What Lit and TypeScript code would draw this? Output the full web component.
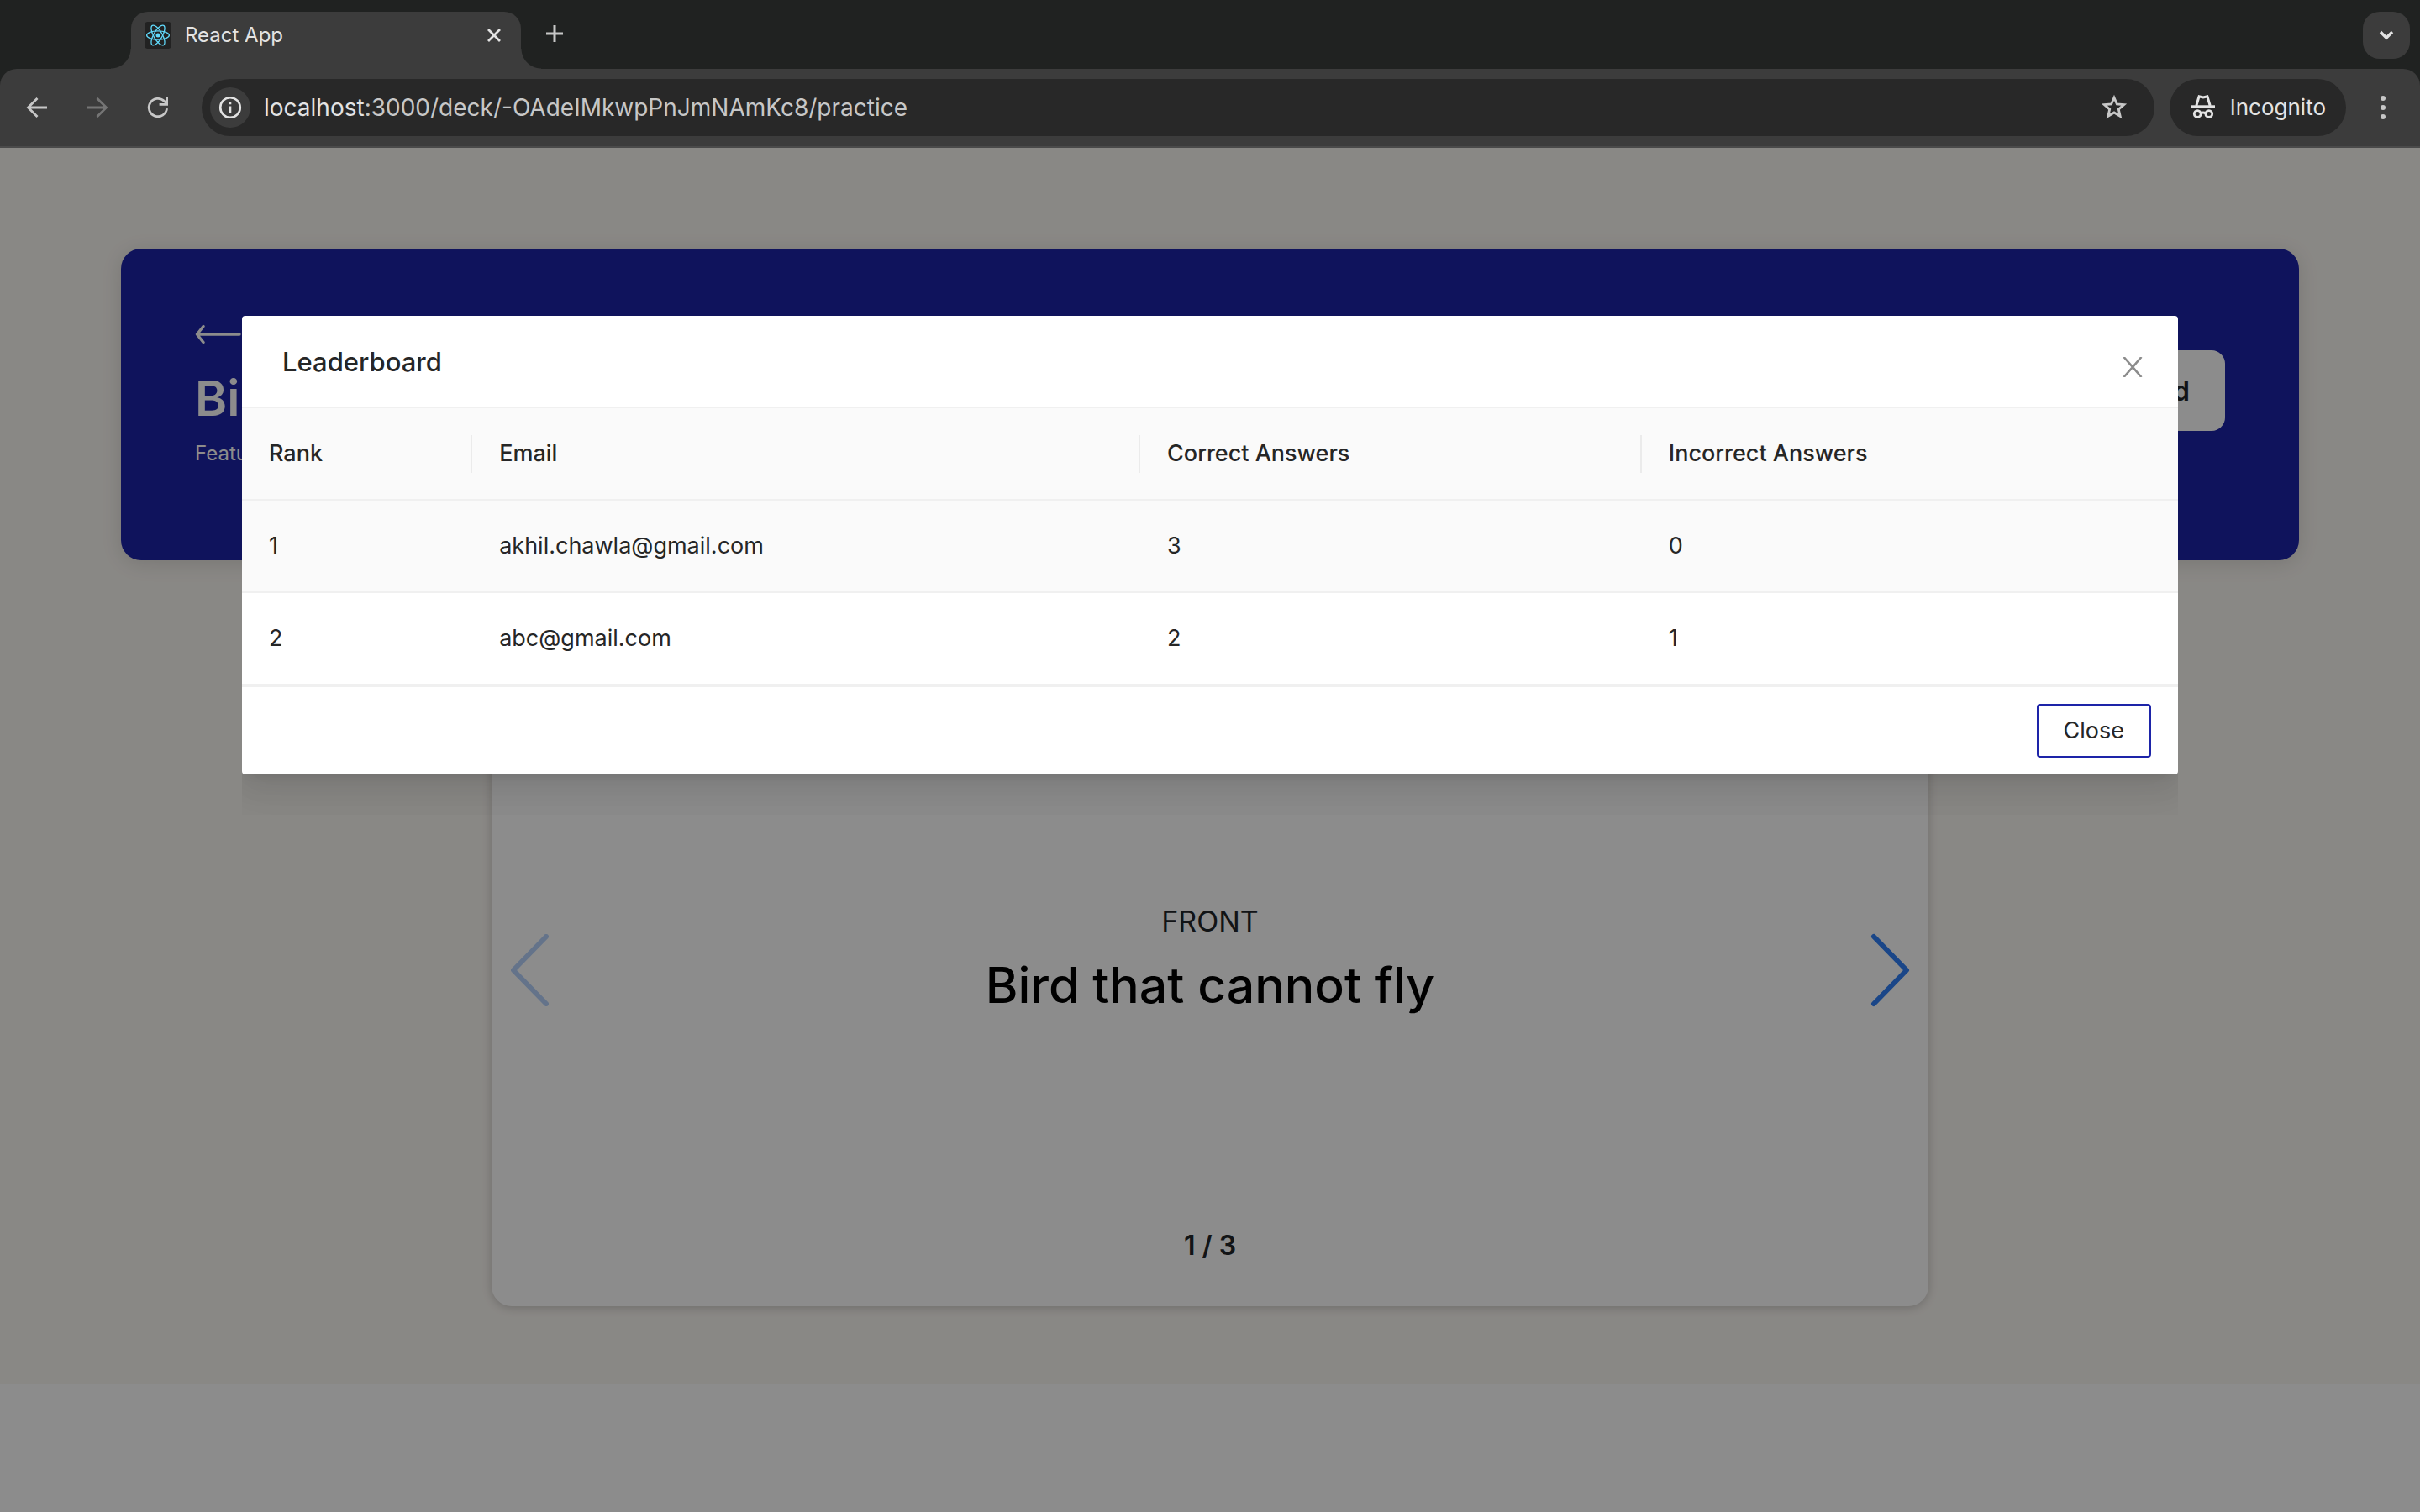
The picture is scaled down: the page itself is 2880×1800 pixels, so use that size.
import { LitElement, html, css, svg } from "lit";
import { customElement, property, state } from "lit/decorators.js";

interface Score {
  rank: number;
  email: string;
  correct: number;
  incorrect: number;
}

const FONT = css`Inter, "Liberation Sans", sans-serif`;

const reset = css`
  * {
    box-sizing: border-box;
  }
  button {
    font: inherit;
    color: inherit;
    background: none;
    border: 0;
    margin: 0;
    padding: 0;
    cursor: pointer;
  }
  svg {
    display: block;
    fill: none;
    stroke: currentColor;
  }
`;

@customElement("browser-bar")
export class BrowserBar extends LitElement {
  @property() url = "";
  @property() host = "";

  static styles = [
    reset,
    css`
      :host {
        display: block;
        background: #202221;
        color: #c7c7c7;
        font-family: ${FONT};
      }
      .strip {
        display: flex;
        align-items: flex-start;
        justify-content: space-between;
        height: 82px;
        padding: 14px 12px 0 156px;
      }
      .tabs {
        display: flex;
      }
      .tab {
        position: relative;
        display: flex;
        align-items: center;
        gap: 16px;
        width: 464px;
        height: 68px;
        padding: 0 20px 12px 16px;
        border-radius: 20px 20px 0 0;
        background: #3c3c3c;
        color: #e3e3e3;
      }
      .tab::before,
      .tab::after {
        content: "";
        position: absolute;
        bottom: 0;
        width: 24px;
        height: 24px;
      }
      .tab::before {
        right: 100%;
        background: radial-gradient(circle at 0 0, transparent 23px, #3c3c3c 24px);
      }
      .tab::after {
        left: 100%;
        background: radial-gradient(circle at 100% 0, transparent 23px, #3c3c3c 24px);
      }
      .tab-title {
        flex: 1;
        font-size: 24px;
        line-height: 32px;
      }
      .tab-close,
      .new-tab {
        display: grid;
        place-items: center;
      }
      .tab-close {
        width: 24px;
        height: 32px;
      }
      .new-tab {
        width: 80px;
        height: 52px;
      }
      .tab-search {
        display: grid;
        place-items: center;
        width: 56px;
        height: 56px;
        border-radius: 20px;
        background: #3c3c3c;
        color: #e3e3e3;
      }
      .toolbar {
        display: flex;
        align-items: center;
        height: 94px;
        padding: 0 20px 0 8px;
        border-bottom: 2px solid #4a4a4a;
        border-radius: 20px 20px 0 0;
        background: #3c3c3c;
      }
      .nav {
        display: flex;
        padding-right: 16px;
      }
      .nav-button {
        display: grid;
        place-items: center;
        width: 72px;
        height: 68px;
      }
      .nav-button:disabled {
        color: #757575;
      }
      .omnibox {
        display: flex;
        flex: 1;
        align-items: center;
        height: 68px;
        padding: 0 32px 0 10px;
        border-radius: 34px;
        background: #282828;
        font-size: 28px;
        line-height: 36px;
      }
      .site-info {
        display: grid;
        place-items: center;
        width: 48px;
        height: 48px;
        margin-right: 16px;
        border-radius: 50%;
        background: #3c3c3c;
        color: #e3e3e3;
      }
      .address {
        flex: 1;
      }
      .address-host {
        color: #e3e3e3;
      }
      .incognito {
        display: flex;
        align-items: center;
        gap: 16px;
        height: 68px;
        margin-left: 18px;
        padding: 0 24px;
        border-radius: 34px;
        background: #282828;
        color: #e3e3e3;
        font-size: 26px;
        line-height: 36px;
      }
      .menu {
        display: grid;
        place-items: center;
        width: 48px;
        height: 68px;
        margin-left: 20px;
      }
    `,
  ];

  render() {
    return html`
      <div class="strip">
        <div class="tabs">
          <div class="tab">
            <svg width="32" height="32" viewBox="0 0 32 32" aria-hidden="true">
              <rect width="32" height="32" rx="4" fill="#222" stroke="none" />
              <g stroke="#61dafb" stroke-width="1.3">
                ${[0, 60, 120].map(
                  (a) => svg`<ellipse cx="16" cy="16" rx="13.4" ry="5.1" transform="rotate(${a} 16 16)" />`,
                )}
              </g>
              <circle cx="16" cy="16" r="2.5" fill="#61dafb" stroke="none" />
            </svg>
            <span class="tab-title">React App</span>
            <button class="tab-close" aria-label="Close tab">
              <svg width="18" height="18" viewBox="0 0 18 18" stroke-width="2.8">
                <path d="M2 2l14 14M16 2L2 16" />
              </svg>
            </button>
          </div>
          <button class="new-tab" aria-label="New tab">
            <svg width="22" height="22" viewBox="0 0 22 22" stroke-width="3"><path d="M11 1v20M1 11h20" /></svg>
          </button>
        </div>
        <button class="tab-search" aria-label="Search tabs">
          <svg width="20" height="14" viewBox="0 0 20 14" stroke-width="3.4"><path d="M3 3l7 7 7-7" /></svg>
        </button>
      </div>
      <div class="toolbar">
        <div class="nav">
          <button class="nav-button" aria-label="Back">
            <svg width="26" height="26" viewBox="0 0 26 26" stroke-width="2.8">
              <path d="M25 13H3M13.5 2L2.5 13l11 11" />
            </svg>
          </button>
          <button class="nav-button" aria-label="Forward" disabled>
            <svg width="26" height="26" viewBox="0 0 26 26" stroke-width="2.8">
              <path d="M1 13h22M12.5 2l11 11-11 11" />
            </svg>
          </button>
          <button class="nav-button" aria-label="Reload">
            <svg width="28" height="28" viewBox="0 0 28 28" stroke-width="2.8">
              <path d="M24.6 15.2A10.7 10.7 0 1 1 21.6 6.500L24 9" />
              <path d="M24.600 2v8.400h-9" />
            </svg>
          </button>
        </div>
        <div class="omnibox">
          <button class="site-info" aria-label="View site information">
            <svg width="28" height="28" viewBox="0 0 28 28" stroke-width="2.6">
              <circle cx="14" cy="14" r="11.8" />
              <path d="M14 12.500v8M14 7.500v2.800" />
            </svg>
          </button>
          <span class="address"><span class="address-host">${this.host}</span>${this.url}</span>
          <button aria-label="Bookmark this tab">
            <svg width="32" height="32" viewBox="0 0 32 32" stroke-width="2.8">
              <path
                d="M16 4.200l3.300 7.700 8.400.7-6.400 5.500 1.900 8.200L16 22l-7.200 4.300 1.900-8.200-6.400-5.500 8.400-.7z"
              />
            </svg>
          </button>
        </div>
        <div class="incognito">
          <svg width="32" height="32" viewBox="0 0 32 32" aria-hidden="true">
            <path d="M2 14.800h28" stroke-width="3" />
            <path d="M7.800 14l3.300-11.300 4.900 1.200 4.900-1.200L24.200 14" stroke-width="3" />
            <g stroke-width="2.8">
              <circle cx="9.200" cy="23.500" r="3.900" />
              <circle cx="22.800" cy="23.500" r="3.900" />
              <path d="M13 23q3-2 6 0" />
            </g>
          </svg>
          <span>Incognito</span>
        </div>
        <button class="menu" aria-label="Browser menu">
          <svg width="6" height="28" viewBox="0 0 6 28">
            <g fill="#c7c7c7" stroke="none">
              <circle cx="3" cy="3" r="3" />
              <circle cx="3" cy="14" r="3" />
              <circle cx="3" cy="25" r="3" />
            </g>
          </svg>
        </button>
      </div>
    `;
  }
}

@customElement("practice-page")
export class PracticePage extends LitElement {
  @property({ type: Number }) index = 1;
  @property({ type: Number }) total = 3;

  static styles = [
    reset,
    css`
      :host {
        display: flex;
        flex-direction: column;
        align-items: center;
        padding: 120px 5% 93px;
        background: #faf7f2;
        font-family: ${FONT};
      }
      .banner {
        display: flex;
        align-items: flex-start;
        justify-content: space-between;
        width: 100%;
        min-height: 371px;
        padding: 88px;
        border-radius: 24px;
        background: #1d24a8;
        box-shadow: 0 4px 24px rgba(0, 0, 0, 0.12);
        color: #fff;
      }
      .deck {
        display: flex;
        flex-direction: column;
        align-items: flex-start;
      }
      .title {
        margin: 24px 0 0;
        font-size: 58px;
        font-weight: 600;
        line-height: 76px;
      }
      .note {
        margin: 10px 0 0;
        font-size: 24px;
        line-height: 36px;
      }
      .board-button {
        height: 96px;
        margin-top: 33px;
        padding: 0 42px;
        border-radius: 16px;
        background: #fff;
        color: #212529;
        font-size: 32px;
        font-weight: 600;
      }
      .card {
        display: grid;
        grid-template: 1fr auto 1fr / auto 1fr auto;
        align-items: center;
        width: 66%;
        min-height: 800px;
        margin-top: 88px;
        padding: 0 22px;
        border-radius: 24px;
        background: #fff;
        box-shadow: 0 2px 12px rgba(0, 0, 0, 0.2);
        text-align: center;
      }
      .chevron {
        grid-row: 2;
        color: #3180f7;
      }
      .chevron:disabled {
        opacity: 0.35;
      }
      .face {
        grid-row: 2;
      }
      .side {
        margin: 0;
        color: #212529;
        font-size: 34px;
        line-height: 48px;
      }
      .question {
        margin: 12px 0 24px;
        color: #000;
        font-size: 59px;
        font-weight: 500;
        line-height: 80px;
      }
      .counter {
        grid-area: 3 / 2;
        align-self: end;
        margin: 0;
        padding-bottom: 48px;
        color: #212529;
        font-size: 32px;
        font-weight: 600;
        line-height: 48px;
      }
    `,
  ];

  render() {
    return html`
      <header class="banner">
        <div class="deck">
          <button aria-label="Back to decks">
            <svg width="56" height="28" viewBox="0 0 56 28" stroke-width="3.4" stroke-linecap="round" stroke-linejoin="round">
              <path d="M53 14H2.500M10 4.500L2.500 14l7.500 9.500" />
            </svg>
          </button>
          <h1 class="title">Bi</h1>
          <p class="note">Featu</p>
        </div>
        <button class="board-button">Leaderboard</button>
      </header>
      <section class="card">
        <button class="chevron" aria-label="Previous card" ?disabled=${this.index === 1}>
          <svg width="48" height="88" viewBox="0 0 48 88" stroke-width="6" stroke-linecap="round" stroke-linejoin="round">
            <path d="M43 4L4 44l39 40" />
          </svg>
        </button>
        <div class="face">
          <p class="side">FRONT</p>
          <h2 class="question">Bird that cannot fly</h2>
        </div>
        <button class="chevron" aria-label="Next card" ?disabled=${this.index === this.total}>
          <svg width="48" height="88" viewBox="0 0 48 88" stroke-width="6" stroke-linecap="round" stroke-linejoin="round">
            <path d="M5 4l39 40L5 84" />
          </svg>
        </button>
        <p class="counter">${this.index} / ${this.total}</p>
      </section>
    `;
  }
}

@customElement("leaderboard-modal")
export class LeaderboardModal extends LitElement {
  @property({ attribute: false }) scores: Score[] = [];

  static styles = [
    reset,
    css`
      :host {
        display: block;
        overflow: hidden;
        padding-bottom: 48px;
        color: #262626;
        font-family: ${FONT};
        font-size: 27px;
        line-height: 44px;
      }
      .dialog {
        position: relative;
        border-radius: 4px;
        background: #fff;
        box-shadow:
          0 6px 12px -8px rgba(0, 0, 0, 0.12),
          0 12px 32px rgba(0, 0, 0, 0.08),
          0 18px 56px 16px rgba(0, 0, 0, 0.05);
      }
      .heading {
        padding: 33px 48px 31px;
        border-bottom: 2px solid #f0f0f0;
      }
      .heading-text {
        margin: 0;
        font-size: 31px;
        font-weight: 500;
        line-height: 44px;
      }
      .dismiss {
        position: absolute;
        top: 4px;
        right: 0;
        display: grid;
        place-items: center;
        width: 108px;
        height: 114px;
        color: #8c8c8c;
      }
      .scores {
        width: 100%;
        border-collapse: separate;
        border-spacing: 0;
        table-layout: fixed;
      }
      .rank-col {
        width: 11.9%;
      }
      .email-col {
        width: 34.5%;
      }
      .correct-col {
        width: 25.9%;
      }
      .cell {
        padding: 32px;
        border-bottom: 2px solid #f0f0f0;
        font-weight: 400;
        text-align: left;
      }
      .head {
        background: #fafafa;
        font-weight: 500;
      }
      .head:not(:last-child) {
        background: linear-gradient(#ebebeb, #ebebeb) right center / 2px 45px no-repeat #fafafa;
      }
      .active .cell {
        background: #fafafa;
      }
      .footer {
        display: flex;
        justify-content: flex-end;
        padding: 20px 32px;
        border-top: 2px solid #f0f0f0;
      }
      .close {
        height: 64px;
        padding: 0 30px;
        border: 2px solid #1d24a8;
        border-radius: 4px;
        background: #fff;
      }
    `,
  ];

  render() {
    return html`
      <div class="dialog" role="dialog" aria-labelledby="heading">
        <div class="heading"><h2 class="heading-text" id="heading">Leaderboard</h2></div>
        <button class="dismiss" aria-label="Dismiss">
          <svg width="24" height="24" viewBox="0 0 24 24" stroke-width="2.6">
            <path d="M1.500 0l21 24M22.500 0l-21 24" />
          </svg>
        </button>
        <table class="scores">
          <colgroup>
            <col class="rank-col" />
            <col class="email-col" />
            <col class="correct-col" />
            <col />
          </colgroup>
          <thead>
            <tr>
              ${["Rank", "Email", "Correct Answers", "Incorrect Answers"].map(
                (label) => html`<th class="cell head" scope="col">${label}</th>`,
              )}
            </tr>
          </thead>
          <tbody>
            ${this.scores.map(
              (s, i) => html`
                <tr class=${i === 0 ? "active" : ""}>
                  <td class="cell">${s.rank}</td>
                  <td class="cell">${s.email}</td>
                  <td class="cell">${s.correct}</td>
                  <td class="cell">${s.incorrect}</td>
                </tr>
              `,
            )}
          </tbody>
        </table>
        <div class="footer"><button class="close">Close</button></div>
      </div>
    `;
  }
}

@customElement("app-root")
export class AppRoot extends LitElement {
  @state() private scores: Score[] = [
    { rank: 1, email: "akhil.chawla@gmail.com", correct: 3, incorrect: 0 },
    { rank: 2, email: "abc@gmail.com", correct: 2, incorrect: 1 },
  ];

  static styles = css`
    :host {
      display: flex;
      flex-direction: column;
      min-height: 100vh;
      background: #fff;
    }
    .viewport {
      position: relative;
      flex: 1;
    }
    .mask {
      position: absolute;
      inset: 0;
      padding: 200px 10% 0;
      background: rgba(0, 0, 0, 0.45);
    }
  `;

  render() {
    return html`
      <browser-bar host="localhost" url=":3000/deck/-OAdeIMkwpPnJmNAmKc8/practice"></browser-bar>
      <main class="viewport">
        <practice-page></practice-page>
        <div class="mask">
          <leaderboard-modal .scores=${this.scores}></leaderboard-modal>
        </div>
      </main>
    `;
  }
}
